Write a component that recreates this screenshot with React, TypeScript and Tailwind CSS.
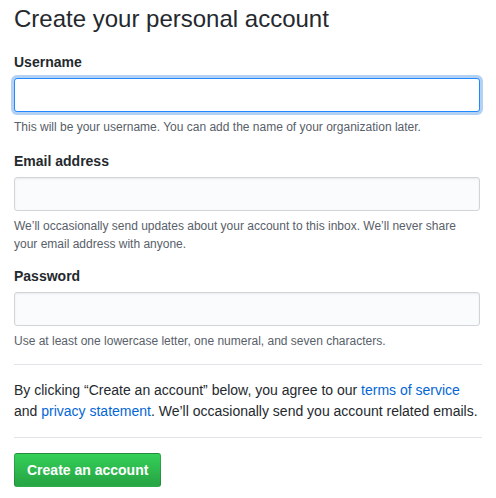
export default function App() {
  return (
    <div className="w-[496px] h-[498px] bg-white px-[14px] font-['Liberation_Sans',Arial,sans-serif] text-[#24292e]">
      <h1 className="text-[24px] leading-[30px] pt-[4px] font-normal">Create your personal account</h1>

      <div className="mt-[18px]">
        <label className="block text-[14px] font-bold leading-[20px]">Username</label>
        <input
          type="text"
          className="mt-[6px] block w-[466px] h-[34px] rounded-[3px] border border-[#2188ff] bg-white px-2 text-[14px] outline-none shadow-[0_0_0_3px_rgba(3,102,214,0.3)]"
        />
        <p className="mt-[6px] text-[12px] leading-[18px] text-[#586069]">
          This will be your username. You can add the name of your organization later.
        </p>
      </div>

      <div className="mt-[15px]">
        <label className="block text-[14px] font-bold leading-[20px]">Email address</label>
        <input
          type="email"
          className="mt-[6px] block w-[466px] h-[34px] rounded-[3px] border border-[#d1d5da] bg-[#fafbfc] px-2 text-[14px] outline-none shadow-[inset_0_1px_2px_rgba(27,31,35,0.075)]"
        />
        <p className="mt-[6px] text-[12px] leading-[18px] text-[#586069]">
          We’ll occasionally send updates about your account to this inbox. We’ll never share your email address with anyone.
        </p>
      </div>

      <div className="mt-[13px]">
        <label className="block text-[14px] font-bold leading-[20px]">Password</label>
        <input
          type="password"
          className="mt-[6px] block w-[466px] h-[34px] rounded-[3px] border border-[#d1d5da] bg-[#fafbfc] px-2 text-[14px] outline-none shadow-[inset_0_1px_2px_rgba(27,31,35,0.075)]"
        />
        <p className="mt-[6px] text-[12px] leading-[18px] text-[#586069]">
          Use at least one lowercase letter, one numeral, and seven characters.
        </p>
      </div>

      <hr className="mt-[14px] border-0 border-t border-[#e1e4e8]" />

      <p className="mt-[15px] text-[14px] leading-[21px]">
        By clicking “Create an account” below, you agree to our{" "}
        <a href="#" className="text-[#0366d6]">terms of service</a> and{" "}
        <a href="#" className="text-[#0366d6]">privacy statement</a>. We’ll occasionally send you account related emails.
      </p>

      <hr className="mt-[15px] border-0 border-t border-[#e1e4e8]" />

      <button className="mt-[15px] h-[34px] px-[12px] rounded-[3px] border border-[rgba(27,31,35,0.2)] bg-[linear-gradient(-180deg,#34d058_0%,#28a745_90%)] text-white text-[14px] font-bold">
        Create an account
      </button>
    </div>
  );
}
